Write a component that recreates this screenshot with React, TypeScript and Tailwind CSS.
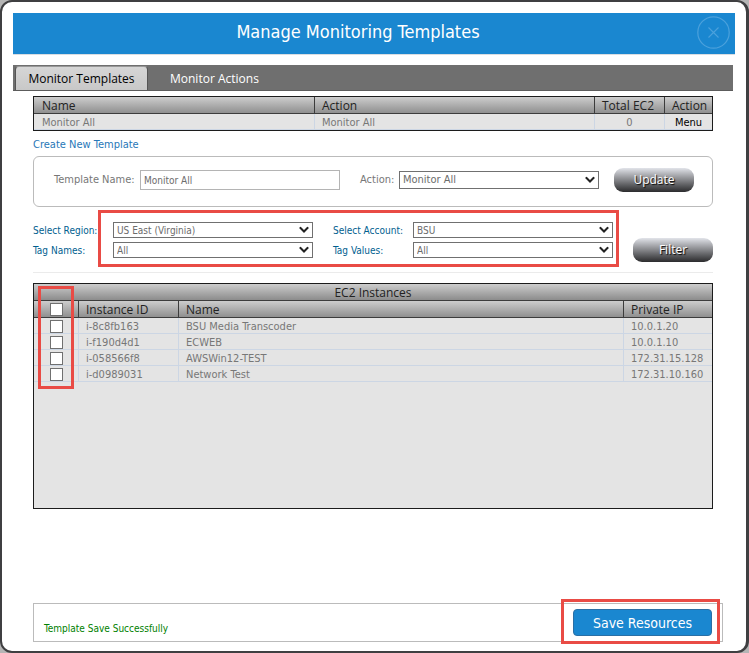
import React, { useState } from 'react';

interface SelectBoxProps {
  id: string;
  options: string[];
  className?: string;
}

const instances = [
  { id: 'i-8c8fb163', name: 'BSU Media Transcoder', ip: '10.0.1.20' },
  { id: 'i-f190d4d1', name: 'ECWEB', ip: '10.0.1.10' },
  { id: 'i-058566f8', name: 'AWSWin12-TEST', ip: '172.31.15.128' },
  { id: 'i-d0989031', name: 'Network Test', ip: '172.31.10.160' },
];

const headCell =
  "h-[17px] border-b border-[#3c3c3c] pt-0.5 pl-[7px] first:pl-2 text-left font-['Open_Sans',sans-serif] text-xs leading-[14px] font-normal text-[#222]";
const bodyCell =
  'h-4 border-b border-[#ccd6e4] pt-0.5 pl-[7px] first:pl-2 text-[11px] leading-[13px] text-[#777]';
const checkbox =
  'block size-[13px] mx-auto appearance-none border border-[#707070] bg-white checked:bg-[#1a87d0]';
const glossyButton =
  "h-6 w-20 shrink-0 rounded-[9px] bg-linear-to-b from-[#e2e4ea] via-[#85868a] to-[#2c2c2e] font-['Open_Sans',sans-serif] text-xs leading-6 font-medium text-white [text-shadow:1px_1px_1px_#000]";

function SelectBox({ id, options, className = 'h-4 pt-px text-[10px]' }: SelectBoxProps) {
  return (
    <div className="relative flex min-w-0 flex-1">
      <select
        id={id}
        className={`w-full appearance-none border border-[#707070] bg-white pl-[3px] leading-[13px] text-[#6c6c6c] ${className}`}
      >
        {options.map((option) => (
          <option key={option}>{option}</option>
        ))}
      </select>
      <svg
        viewBox="0 0 10 7"
        className="pointer-events-none absolute top-1/2 right-1 h-[7px] w-[10px] -translate-y-1/2"
        fill="none"
        stroke="#222"
        strokeWidth="2"
      >
        <path d="M0.8 0.8 L5 5 L9.2 0.8" />
      </svg>
    </div>
  );
}

function FilterField({ id, label, value }: { id: string; label: string; value: string }) {
  return (
    <div className="flex items-center">
      <label htmlFor={id} className="w-20 shrink-0 pt-px text-[10px] leading-[15px] whitespace-nowrap text-[#00608f]">
        {label}
      </label>
      <SelectBox id={id} options={[value]} />
    </div>
  );
}

function TemplateTable() {
  return (
    <table className="w-full table-fixed border-separate border-spacing-0 border border-[#1c1c1c] bg-[#e4e4e4]">
      <colgroup>
        <col />
        <col />
        <col className="w-[70px]" />
        <col className="w-12" />
      </colgroup>
      <thead>
        <tr className="bg-linear-to-b from-[#cdcdcd] to-[#8c8c8c]">
          <th className={headCell}>Name</th>
          <th className={`${headCell} border-l`}>Action</th>
          <th className={`${headCell} border-l`}>Total EC2</th>
          <th className={`${headCell} border-l`}>Action</th>
        </tr>
      </thead>
      <tbody>
        <tr>
          <td className={bodyCell}>Monitor All</td>
          <td className={`${bodyCell} border-l`}>Monitor All</td>
          <td className="h-4 border-b border-l border-[#ccd6e4] pt-0.5 text-center text-[11px] leading-[13px] text-[#777]">0</td>
          <td className="h-4 border-b border-l border-[#ccd6e4] pt-0.5 text-center text-[11px] leading-[13px] text-black">
            <button type="button" className="block w-full">Menu</button>
          </td>
        </tr>
      </tbody>
    </table>
  );
}

function InstanceTable() {
  const [selected, setSelected] = useState<string[]>([]);
  const allSelected = selected.length === instances.length;

  const toggle = (id: string) =>
    setSelected((prev) => (prev.includes(id) ? prev.filter((x) => x !== id) : [...prev, id]));

  return (
    <div className="relative min-h-[226px] border border-[#1c1c1c] bg-[#e4e4e4]">
      <table className="w-full table-fixed border-separate border-spacing-0">
        <caption className="h-[17px] border-b border-[#3c3c3c] bg-linear-to-b from-[#cdcdcd] to-[#8c8c8c] text-center font-['Open_Sans',sans-serif] text-xs leading-[17px] text-[#222]">
          EC2 Instances
        </caption>
        <colgroup>
          <col className="w-11" />
          <col className="w-[100px]" />
          <col />
          <col className="w-[89px]" />
        </colgroup>
        <thead>
          <tr className="bg-linear-to-b from-[#cdcdcd] to-[#8c8c8c]">
            <th className="h-[17px] border-b border-[#3c3c3c] p-0">
              <input
                type="checkbox"
                aria-label="Select all instances"
                className={checkbox}
                checked={allSelected}
                onChange={() => setSelected(allSelected ? [] : instances.map((x) => x.id))}
              />
            </th>
            <th className={`${headCell} border-l`}>Instance ID</th>
            <th className={`${headCell} border-l`}>Name</th>
            <th className={`${headCell} border-l`}>Private IP</th>
          </tr>
        </thead>
        <tbody>
          {instances.map((instance) => (
            <tr key={instance.id}>
              <td className="h-4 border-b border-[#ccd6e4] px-0 pt-0.5 pb-0">
                <input
                  type="checkbox"
                  aria-label={`Select ${instance.name}`}
                  className={checkbox}
                  checked={selected.includes(instance.id)}
                  onChange={() => toggle(instance.id)}
                />
              </td>
              <td className={`${bodyCell} border-l`}>{instance.id}</td>
              <td className={`${bodyCell} border-l`}>{instance.name}</td>
              <td className={`${bodyCell} border-l`}>{instance.ip}</td>
            </tr>
          ))}
        </tbody>
      </table>
      <div className="pointer-events-none absolute top-0.5 left-1 h-[103px] w-9 border-3 border-[#e94b45]" />
    </div>
  );
}

export default function App() {
  return (
    <div className="flex min-h-screen flex-col bg-[#b5b5b5] font-['DejaVu_Sans_Condensed','Noto_Sans',sans-serif]">
      <div className="flex flex-1 flex-col rounded-xl border-2 border-r-3 border-[#3f3f41] bg-white px-[11px] pt-[11px] pb-[9px]">
        <header className="relative flex h-[41px] items-center justify-center bg-[#1a87d0] shadow-[0_1px_0_#d8dde2]">
          <h1 className="pr-8 pb-1 text-lg leading-6 text-white">Manage Monitoring Templates</h1>
          <button type="button" aria-label="Close" className="absolute top-[3px] right-[5px]">
            <svg viewBox="0 0 33 33" className="size-[33px]" fill="none" stroke="#4ba1dc">
              <circle cx="16.5" cy="16.5" r="15.7" strokeWidth="1.2" />
              <path d="M11.5 11.5 L21.5 21.5 M21.5 11.5 L11.5 21.5" strokeWidth="1.1" />
            </svg>
          </button>
        </header>

        <nav className="mt-[11px] mr-0.5 flex h-[26px] border-b border-[#5c5c5c] bg-[#6f6f6f] pt-px pl-0.5 font-['Open_Sans',sans-serif] text-xs leading-6">
          <button
            type="button"
            className="w-[133px] rounded-t-sm border-x border-t border-x-[#555] border-t-[#999] bg-linear-to-b from-[#d6d6d6] to-[#c8c8c8] text-black"
          >
            Monitor Templates
          </button>
          <button type="button" className="ml-[22px] pt-px text-white">
            Monitor Actions
          </button>
        </nav>

        <main className="mt-[5px] mr-[22px] ml-5">
          <TemplateTable />

          <a href="#new" className="mt-[5px] block w-fit text-[11px] leading-[18px] text-[#2878b8]">
            Create New Template
          </a>

          <form
            className="mt-0.5 flex h-[51px] items-center rounded-md border border-[#bbb] pr-[18px] pb-1 pl-5"
            onSubmit={(e) => e.preventDefault()}
          >
            <label htmlFor="template-name" className="w-[86px] shrink-0 pt-0.5 text-[11px] whitespace-nowrap text-[#777]">
              Template Name:
            </label>
            <div className="flex min-w-0 flex-1">
              <input
                id="template-name"
                defaultValue="Monitor All"
                className="h-5 w-full border border-[#b4b4b4] px-[3px] pt-0.5 text-[10px] text-[#6c6c6c]"
              />
            </div>
            <label htmlFor="template-action" className="ml-5 w-[39px] shrink-0 pt-0.5 text-[11px] text-[#777]">
              Action:
            </label>
            <SelectBox id="template-action" options={['Monitor All']} className="h-[18px] text-[11px]" />
            <button type="submit" className={`ml-[15px] ${glossyButton}`}>
              Update
            </button>
          </form>

          <div className="relative mt-[15px] flex items-end border-b border-[#ebebeb] pb-[10px]">
            <div className="mb-1 grid flex-1 grid-cols-2 gap-x-5 gap-y-1">
              <FilterField id="region" label="Select Region:" value="US East (Virginia)" />
              <FilterField id="account" label="Select Account:" value="BSU" />
              <FilterField id="tag-names" label="Tag Names:" value="All" />
              <FilterField id="tag-values" label="Tag Values:" value="All" />
            </div>
            <button type="button" className={`ml-5 ${glossyButton}`}>
              Filter
            </button>
            <div className="pointer-events-none absolute -top-3 right-[94px] bottom-[5px] left-[65px] border-3 border-[#e94b45]" />
          </div>

          <div className="mt-[10px]">
            <InstanceTable />
          </div>
        </main>

        <footer className="relative mt-auto mr-3 ml-5 flex h-[39px] items-center justify-between border border-[#bbb] pr-[10px] pl-[10px]">
          <p className="pt-3 text-[10px] leading-4 text-[#008000]">Template Save Successfully</p>
          <button
            type="button"
            className="h-[27px] w-[139px] rounded-sm border border-[#2a6fa5] bg-[#1a87d0] text-sm leading-6 text-white"
          >
            Save Resources
          </button>
          <div className="pointer-events-none absolute -top-[5px] right-0.5 h-[45px] w-[159px] border-3 border-[#e94b45]" />
        </footer>
      </div>
    </div>
  );
}
